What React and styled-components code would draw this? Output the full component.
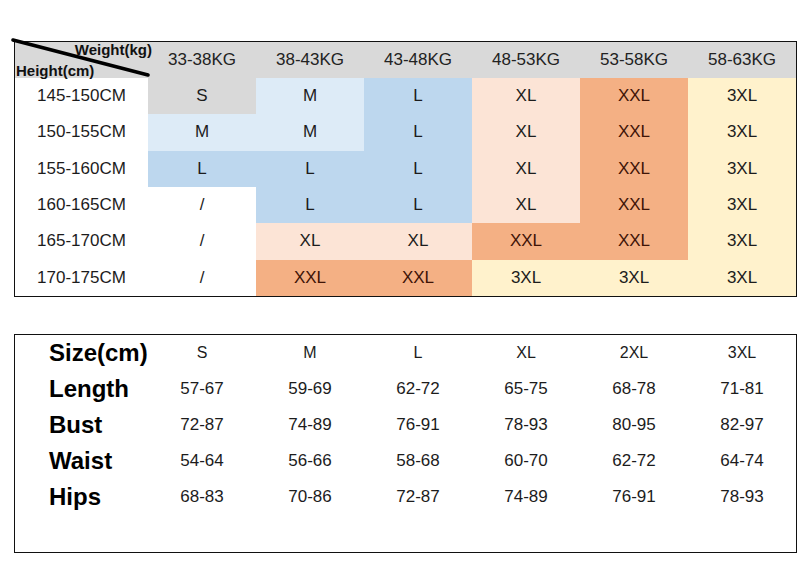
import React from 'react';
import styled, { createGlobalStyle } from 'styled-components';

const colors = {
  g: '#d9d9d9',
  lb: '#ddebf7',
  b: '#bdd7ee',
  p: '#fce4d6',
  o: '#f4b084',
  y: '#fff2cc',
  w: '#ffffff'
};

const weights = ['33-38KG', '38-43KG', '43-48KG', '48-53KG', '53-58KG', '58-63KG'];

const heightRows = [
  { label: '145-150CM', cells: [['S', 'g'], ['M', 'lb'], ['L', 'b'], ['XL', 'p'], ['XXL', 'o'], ['3XL', 'y']] },
  { label: '150-155CM', cells: [['M', 'lb'], ['M', 'lb'], ['L', 'b'], ['XL', 'p'], ['XXL', 'o'], ['3XL', 'y']] },
  { label: '155-160CM', cells: [['L', 'b'], ['L', 'b'], ['L', 'b'], ['XL', 'p'], ['XXL', 'o'], ['3XL', 'y']] },
  { label: '160-165CM', cells: [['/', 'w'], ['L', 'b'], ['L', 'b'], ['XL', 'p'], ['XXL', 'o'], ['3XL', 'y']] },
  { label: '165-170CM', cells: [['/', 'w'], ['XL', 'p'], ['XL', 'p'], ['XXL', 'o'], ['XXL', 'o'], ['3XL', 'y']] },
  { label: '170-175CM', cells: [['/', 'w'], ['XXL', 'o'], ['XXL', 'o'], ['3XL', 'y'], ['3XL', 'y'], ['3XL', 'y']] }
];

const sizes = ['S', 'M', 'L', 'XL', '2XL', '3XL'];

const measures = [
  { label: 'Length', values: ['57-67', '59-69', '62-72', '65-75', '68-78', '71-81'] },
  { label: 'Bust', values: ['72-87', '74-89', '76-91', '78-93', '80-95', '82-97'] },
  { label: 'Waist', values: ['54-64', '56-66', '58-68', '60-70', '62-72', '64-74'] },
  { label: 'Hips', values: ['68-83', '70-86', '72-87', '74-89', '76-91', '78-93'] }
];

export default function App() {
  return (
    <>
      <GlobalStyle />
      <Page>
        <SizeChart>
          <CornerCell>
            <Diagonal width="142" height="42" viewBox="0 0 142 42">
              <line x1="1" y1="2" x2="136" y2="37" stroke="#000" strokeWidth="3.6" strokeLinecap="round" />
            </Diagonal>
            <WeightLabel>Weight(kg)</WeightLabel>
            <HeightLabel>Height(cm)</HeightLabel>
          </CornerCell>
          {weights.map((w) => (
            <HeadCell key={w}>{w}</HeadCell>
          ))}
          {heightRows.map((row) => (
            <React.Fragment key={row.label}>
              <Cell $bg={colors.w}>{row.label}</Cell>
              {row.cells.map(([size, tone], i) => (
                <Cell key={`${row.label}-${i}`} $bg={colors[tone]} $dark={tone === 'o'}>
                  {size}
                </Cell>
              ))}
            </React.Fragment>
          ))}
        </SizeChart>

        <MeasureTable>
          <RowLabel>Size(cm)</RowLabel>
          {sizes.map((s) => (
            <SizeHead key={s}>{s}</SizeHead>
          ))}
          {measures.map((m) => (
            <React.Fragment key={m.label}>
              <RowLabel>{m.label}</RowLabel>
              {m.values.map((v, i) => (
                <Value key={`${m.label}-${i}`}>{v}</Value>
              ))}
            </React.Fragment>
          ))}
        </MeasureTable>
      </Page>
    </>
  );
}

const GlobalStyle = createGlobalStyle`
  body {
    margin: 0;
    background: #ffffff;
    font-family: "Liberation Sans", Arial, sans-serif;
  }
`;

const Page = styled.div`
  width: 800px;
  height: 567px;
  padding: 41px 0 0 14px;
  box-sizing: border-box;
  overflow: hidden;
`;

const SizeChart = styled.div`
  position: relative;
  width: 783px;
  height: 256px;
  box-sizing: border-box;
  border: 1px solid #111;
  display: grid;
  grid-template-columns: 133px repeat(6, 108px);
  grid-template-rows: 36px repeat(6, 1fr);
`;

const Cell = styled.div`
  display: flex;
  align-items: center;
  justify-content: center;
  background: ${(p) => p.$bg};
  color: ${(p) => (p.$dark ? '#3f1407' : '#1c1c1c')};
  font-size: 17px;
`;

const HeadCell = styled(Cell)`
  background: ${colors.g};
  color: #222;
`;

const CornerCell = styled.div`
  position: relative;
  display: flex;
  flex-direction: column;
  justify-content: space-between;
  background: ${colors.g};
  color: #111;
  font-size: 15px;
  font-weight: bold;
  line-height: 15px;
`;

const WeightLabel = styled.span`
  align-self: flex-end;
  margin-right: -4px;
  position: relative;
  z-index: 1;
`;

const HeightLabel = styled.span`
  align-self: flex-start;
  padding-left: 1px;
`;

const Diagonal = styled.svg`
  position: absolute;
  left: -3px;
  top: -4px;
  overflow: visible;
  z-index: 2;
`;

const MeasureTable = styled.div`
  width: 783px;
  height: 219px;
  margin-top: 37px;
  box-sizing: border-box;
  border: 1px solid #111;
  display: grid;
  grid-template-columns: 133px repeat(6, 108px);
  grid-template-rows: repeat(5, 36px);
  align-content: start;
`;

const RowLabel = styled.div`
  display: flex;
  align-items: center;
  padding-left: 34px;
  font-size: 24px;
  font-weight: bold;
  color: #000;
`;

const Value = styled.div`
  display: flex;
  align-items: center;
  justify-content: center;
  font-size: 17px;
  color: #1c1c1c;
`;

const SizeHead = styled(Value)`
  font-size: 16px;
`;
